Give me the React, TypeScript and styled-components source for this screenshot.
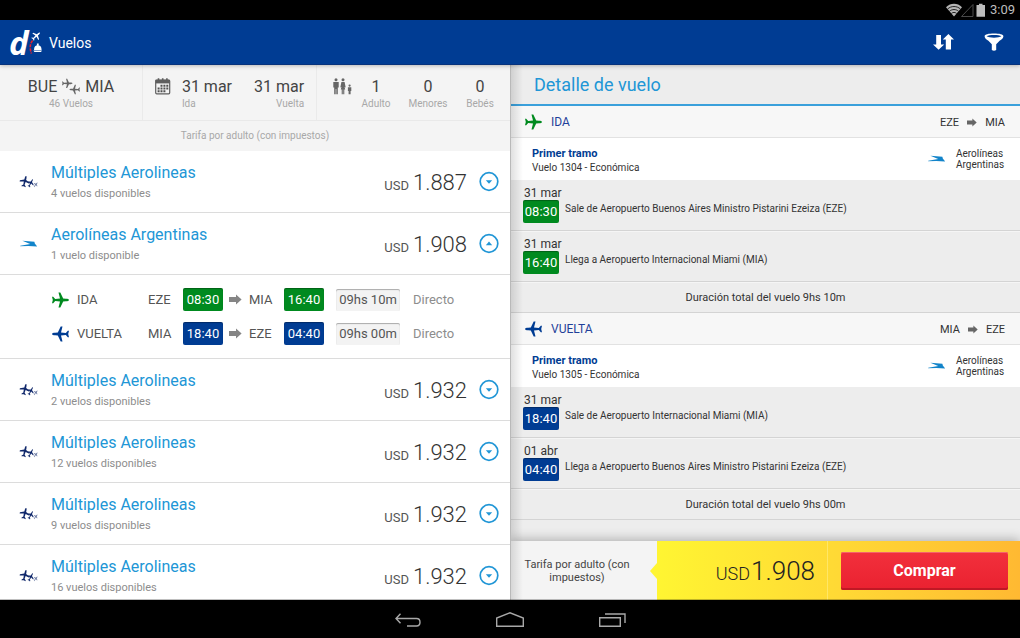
import React, { useState } from "react";
import styled, { createGlobalStyle } from "styled-components";

const GlobalStyle = createGlobalStyle`
  * { box-sizing: border-box; }
  body { margin: 0; background: #000; font-family: Roboto, "Liberation Sans", sans-serif; }
  button { font: inherit; border: 0; padding: 0; background: none; cursor: pointer; }
  h1, h2, h3, p, ul { margin: 0; padding: 0; font-size: inherit; font-weight: inherit; }
  ul { list-style: none; }
  svg { display: block; flex: none; overflow: visible; }
`;

const NAVY = "#003c93";
const GREEN = "#008a1f";
const SKY = "#2196d6";

type Tone = "ida" | "vuelta";
const toneColor = (tone: Tone) => (tone === "ida" ? GREEN : NAVY);

/* ---------- Layout ---------- */

const Screen = styled.div`
  display: flex;
  flex-direction: column;
  height: 100vh;
  overflow: hidden;
`;

const StatusBar = styled.div`
  display: flex;
  align-items: center;
  justify-content: flex-end;
  height: 20px;
  padding-right: 5px;
  background: #000;
  color: #bdbdbd;
  font-size: 13px;
`;

const Clock = styled.span`
  margin-left: 4px;
  line-height: 20px;
`;

const AppBar = styled.header`
  position: relative;
  z-index: 3;
  display: flex;
  align-items: center;
  height: 45px;
  padding: 0 15px 0 9px;
  background: ${NAVY};
  border-bottom: 1px solid #07327c;
  box-shadow: 0 1px 4px rgba(0, 0, 0, 0.25);
  color: #fff;
`;

const AppTitle = styled.h1`
  flex: 1;
  margin-left: 7px;
  padding-top: 1px;
  font-size: 14px;
  line-height: 20px;
`;

const BarActions = styled.div`
  display: flex;
  gap: 28px;
`;

const BarButton = styled.button`
  display: grid;
  place-items: center;
  width: 22px;
  height: 32px;
`;

const Panes = styled.main`
  display: grid;
  grid-template-columns: 1fr 1fr;
  flex: 1;
  min-height: 0;
`;

const ResultsPane = styled.section`
  overflow: hidden;
  background: #fff;
`;

const DetailPane = styled.section`
  position: relative;
  display: flex;
  flex-direction: column;
  overflow: hidden;
  background: #ededed;
  border-left: 1px solid #b9b9b9;
  &::before {
    content: "";
    position: absolute;
    z-index: 2;
    inset: 0 auto 0 0;
    width: 12px;
    background: linear-gradient(to right, rgba(0, 0, 0, 0.12), rgba(0, 0, 0, 0));
    pointer-events: none;
  }
`;

const NavBar = styled.nav`
  position: relative;
  z-index: 3;
  display: flex;
  align-items: center;
  justify-content: center;
  gap: 72px;
  height: 38px;
  padding-top: 1px;
  background: #000;
  box-shadow: 0 -1px 0 rgba(0, 0, 0, 0.25);
`;

const NavButton = styled.button`
  display: grid;
  place-items: center;
  width: 30px;
  height: 30px;
`;

/* ---------- Search summary ---------- */

const Summary = styled.div`
  display: grid;
  grid-template-columns: 142fr 174fr 194fr;
  height: 56px;
  background: #f4f4f4;
  border-bottom: 1px solid #e9e9e9;
`;

const SummaryCell = styled.div<{ $inset?: number }>`
  display: flex;
  justify-content: center;
  padding: 12px 0 0 ${(p) => p.$inset ?? 0}px;
  & + & { border-left: 1px solid #eaeaea; }
`;

const SummaryIcon = styled.span<{ $gap: number }>`
  margin: 1px ${(p) => p.$gap}px 0 0;
`;

const Datum = styled.div<{ $align?: string; $width?: number }>`
  width: ${(p) => (p.$width ? `${p.$width}px` : "auto")};
  text-align: ${(p) => p.$align ?? "center"};
`;

const DatumValue = styled.div`
  display: flex;
  align-items: center;
  justify-content: center;
  gap: 5px;
  color: #444;
  font-size: 16px;
  line-height: 20px;
`;

const PlainValue = styled.div`
  color: #444;
  font-size: 16px;
  line-height: 20px;
`;

const DatumLabel = styled.div`
  color: #a8a8a8;
  font-size: 10px;
  line-height: 14px;
`;

const Dates = styled.div`
  display: flex;
  gap: 22px;
`;

const FareNote = styled.p`
  height: 30px;
  background: #f4f4f4;
  color: #a8a8a8;
  font-size: 10px;
  line-height: 30px;
  text-align: center;
`;

/* ---------- Result list ---------- */

const ResultRow = styled.div`
  display: flex;
  align-items: center;
  height: 62px;
  padding: 0 11px 0 20px;
  border-bottom: 1px solid #dcdcdc;
`;

const AirlineInfo = styled.div`
  flex: 1;
  margin-left: 13px;
  padding-top: 2px;
`;

const AirlineName = styled.h2`
  color: ${SKY};
  font-size: 16px;
  line-height: 20px;
`;

const Availability = styled.p`
  margin-top: 3px;
  color: #8d8d8d;
  font-size: 11px;
  line-height: 16px;
`;

const Price = styled.div`
  display: flex;
  align-items: baseline;
  gap: 4px;
  margin-right: 12px;
  padding-top: 5px;
  color: #333;
  font-size: 22px;
  font-weight: 300;
  line-height: 24px;
`;

const Currency = styled.span`
  color: #555;
  font-size: 13px;
  font-weight: 400;
`;

const ToggleButton = styled.button`
  width: 20px;
  height: 20px;
`;

const Itinerary = styled.div`
  display: grid;
  row-gap: 12px;
  padding: 13px 20px 14px 52px;
  border-bottom: 1px solid #dcdcdc;
`;

const ItineraryLeg = styled.div`
  display: grid;
  grid-template-columns: 25px 71px 35px 46px 20px 35px 52px 77px 1fr;
  align-items: center;
  justify-items: start;
  height: 22px;
  color: #555;
  font-size: 13px;
`;

const TimeChip = styled.span<{ $tone: Tone; $compact?: boolean }>`
  display: block;
  width: ${(p) => (p.$compact ? 36 : 40)}px;
  height: 23px;
  background: ${(p) => toneColor(p.$tone)};
  border-radius: 2px;
  box-shadow: inset 0 1px 1px rgba(0, 0, 0, 0.3);
  color: #fff;
  font-size: 13px;
  line-height: 24px;
  text-align: center;
`;

const DurationChip = styled.span`
  width: 64px;
  height: 22px;
  background: #f3f3f3;
  border-radius: 2px;
  box-shadow: inset 0 1px 1px rgba(0, 0, 0, 0.3);
  line-height: 22px;
  text-align: center;
`;

const Stops = styled.span`
  color: #8d8d8d;
`;

/* ---------- Flight detail ---------- */

const DetailHeader = styled.h2`
  height: 41px;
  padding-left: 23px;
  border-bottom: 2px solid #3aa0db;
  color: ${SKY};
  font-size: 18px;
  line-height: 40px;
`;

const DetailScroll = styled.div`
  flex: 1;
  min-height: 0;
  overflow: hidden;
`;

const LegHeader = styled.div`
  display: flex;
  align-items: center;
  height: 32px;
  padding: 0 15px 0 14px;
  background: #f7f7f7;
  border-bottom: 1px solid #e2e2e2;
  color: #333;
`;

const LegName = styled.h3`
  flex: 1;
  margin-left: 8px;
  padding-top: 1px;
  color: #1f3f99;
  font-size: 12px;
`;

const LegRoute = styled.div`
  display: flex;
  align-items: center;
  gap: 8px;
  padding-top: 1px;
  font-size: 11px;
`;

const Tramo = styled.div`
  display: flex;
  align-items: center;
  height: 42px;
  padding: 0 17px 0 21px;
  background: #fff;
  color: #333;
  font-size: 10px;
`;

const TramoInfo = styled.div`
  flex: 1;
  padding-top: 3px;
  line-height: 14px;
`;

const TramoTitle = styled.h3`
  color: ${NAVY};
  font-size: 11px;
  font-weight: 700;
`;

const Carrier = styled.p`
  width: 47px;
  margin-left: 10px;
  line-height: 11px;
`;

const Segment = styled.div`
  display: flex;
  align-items: center;
  gap: 6px;
  height: 51px;
  padding: 6px 12px 0;
  border-bottom: 1px solid #d4d4d4;
  box-shadow: 0 1px 0 #f5f5f5;
  color: #333;
  font-size: 10px;
`;

const Departure = styled.div`
  width: 36px;
  padding-bottom: 7px;
  font-size: 12px;
  line-height: 14px;
  white-space: nowrap;
`;

const DepartureDate = styled.div`
  padding-left: 1px;
`;

const TotalTime = styled.p`
  height: 31px;
  border-bottom: 1px solid #d4d4d4;
  color: #333;
  font-size: 11px;
  line-height: 31px;
  text-align: center;
`;

const Checkout = styled.footer`
  position: relative;
  display: grid;
  grid-template-columns: 146fr 363fr;
  height: 59px;
  background: #f4f4f4;
  box-shadow: 0 -2px 10px rgba(0, 0, 0, 0.25);
`;

const CheckoutNote = styled.p`
  align-self: center;
  padding: 0 20px 0 6px;
  color: #444;
  font-size: 11px;
  line-height: 13px;
  text-align: center;
`;

const CheckoutPanel = styled.div`
  position: relative;
  display: grid;
  grid-template-columns: 170fr 193fr;
  align-items: center;
  background: linear-gradient(to right, #fff532, #ffd935 50%, #ffb932);
  &::before {
    content: "";
    position: absolute;
    top: 22px;
    left: -7px;
    border: solid transparent;
    border-width: 8px 7px 8px 0;
    border-right-color: #fff532;
  }
`;

const Total = styled.div`
  display: flex;
  align-items: baseline;
  justify-content: flex-end;
  gap: 1px;
  padding: 4px 12px 0 0;
  color: #222;
  font-size: 26px;
  font-weight: 300;
  line-height: 30px;
`;

const TotalCurrency = styled.span`
  font-size: 18px;
`;

const BuyCell = styled.div`
  display: flex;
  align-items: center;
  height: 100%;
  padding: 0 12px 0 13px;
  border-left: 1px solid #ffe766;
`;

const BuyButton = styled.button`
  flex: 1;
  height: 38px;
  background: linear-gradient(#f2303c, #ea2130);
  border-radius: 2px;
  box-shadow: inset 0 -2px 0 #c01824, inset 0 1px 0 #f5626b;
  color: #fff;
  font-size: 16px;
  font-weight: 700;
`;

/* ---------- Icons ---------- */

const PLANE =
  "M18 8C18 7.1 16.5 6.8 15 6.7L12.2 6.6 9.3.4H7.5L9 6.6 4.2 7 2.2 4.8H1L1.8 8 1 11.2H2.2L4.2 9 9 9.4 7.5 15.6H9.3L12.2 9.4 15 9.3C16.5 9.2 18 8.9 18 8Z";

const PlaneIcon = ({ tone }: { tone: Tone }) => (
  <svg width="18" height="16" viewBox="1 0 18 16" fill={toneColor(tone)} aria-hidden="true">
    <path d={PLANE} transform={tone === "ida" ? undefined : "matrix(-1 0 0 1 19 0)"} />
  </svg>
);

const SwapPlanes = () => (
  <svg width="18" height="16" viewBox="0 0 18 16" fill="#666" aria-hidden="true">
    <path d={PLANE} transform="translate(-.6 -.6) scale(.62)" />
    <path d={PLANE} transform="matrix(-.62 0 0 .62 18.6 5.600)" />
  </svg>
);

const ArrowIcon = ({ small }: { small?: boolean }) => (
  <svg width={small ? 10 : 13} height={small ? 9 : 11} viewBox="0 0 13 11" fill={small ? "#666" : "#858585"} aria-hidden="true">
    <path d="M0 3h7V.4L12.6 5.5 7 10.6V8H0Z" />
  </svg>
);

const MultiAirlineIcon = () => (
  <svg width="18" height="14" viewBox="0 0 18 14" fill="#10286b" aria-hidden="true">
    <path d={PLANE} transform="translate(4.8 6.400) rotate(-76) scale(.64 .66) translate(-9.5 -8)" />
    <path d={PLANE} transform="translate(10.800 8) rotate(-62) scale(.5 .42) translate(-9.5 -8)" />
    <path d={PLANE} transform="translate(15.800 9.600) rotate(-50) scale(.3 .28) translate(-9.5 -8)" opacity=".7" />
  </svg>
);

const CondorIcon = () => (
  <svg width="18" height="8" viewBox="0 0 18 8" aria-hidden="true">
    <path d="M2.4.8 14.4 1.800 14.800 3.400 17.2 6.400 8.200 5.900.2 6.200.2 5.700 10.200 4Z" fill="#1284ca" />
  </svg>
);

const BrandLogo = () => (
  <svg width="33" height="32" viewBox="0 0 33 32" aria-hidden="true">
    <text x="0" y="29" fill="#fff" fontFamily="'Open Sans', sans-serif" fontSize="33" fontWeight="700" fontStyle="italic">
      d
    </text>
    <path d="M23.6 14.500C20.8 18 20.600 22 22.4 27.500" fill="none" stroke="#e4202d" strokeWidth="1.6" strokeDasharray="3.200 1" />
    <path d={PLANE} fill="#fff" transform="translate(27.200 10) rotate(-42) scale(.58) translate(-9.500 -8)" />
    <path d="M25 24C25 20.6 26.6 19.2 28.8 19.2S32.600 20.600 32.600 24ZM24.400 24.400H33L32 26H25.400ZM27.900 17.600H29.700V19.200H27.900Z" fill="#fff" />
  </svg>
);

const SortIcon = () => (
  <svg width="22" height="16" viewBox="0 0 22 16" fill="#fff" aria-hidden="true">
    <path d="M3.200 1H8V10.400H11.200L5.600 15.800 0 10.400H3.200ZM12.800 15.400V5.600H9.800L15.400 0 21 5.600H18V15.400Z" />
  </svg>
);

const FunnelIcon = () => (
  <svg width="20" height="18" viewBox="0 0 20 18" aria-hidden="true">
    <path d="M.6 3.200C.6 1.200 4.600.4 10 .4S19.400 1.200 19.400 3.200C19.400 5 17.800 6.200 15.600 7.800L12.200 11.200V17Q10 18.400 7.800 17V11.200L4.400 7.800C2.200 6.200.6 5 .6 3.200Z" fill="#fff" />
    <path d="M2.600 3.300C5 1.600 15 1.600 17.400 3.300 15 5.200 5 5.200 2.600 3.300Z" fill={NAVY} />
  </svg>
);

const CalendarIcon = () => (
  <svg width="16" height="17" viewBox="0 0 16 17" aria-hidden="true">
    <rect x=".7" y="2" width="14" height="13.800" rx="1" fill="#f4f4f4" stroke="#5e5e5e" strokeWidth="1.200" />
    <path d="M.7 1.800H14.700V5.400H.7Z" fill="#5e5e5e" />
    <path d="M3.500.2V2M7.700.2V2M11.900.2V2" stroke="#5e5e5e" strokeWidth="1.600" />
    <path d="M5.500 7.800H13.500M2.600 10.500H13.500M2.600 13.200H10.600" stroke="#505050" strokeWidth="2" strokeDasharray="2 .900" />
  </svg>
);

const FamilyIcon = () => (
  <svg width="19" height="17" viewBox="0 0 19 17" fill="#666" aria-hidden="true">
    <circle cx="3" cy="1.800" r="1.500" />
    <path d="M.3 4H5.700V9.600H4.800V16.200H3.300V11H2.700V16.200H1.200V9.600H.3Z" />
    <circle cx="10" cy="1.800" r="1.500" />
    <path d="M8.400 4H11.600L12.700 9.400 11.600 9 12.200 11.600H11.300V16.200H10.200V11.600H9.800V16.200H8.700V11.600H7.800L8.400 9 7.300 9.400Z" />
    <circle cx="16.600" cy="7.600" r="1.100" />
    <path d="M14.900 9.200H18.300V13H17.600V16.200H15.600V13H14.900Z" />
  </svg>
);

const ToggleIcon = ({ up }: { up: boolean }) => (
  <svg width="20" height="20" viewBox="0 0 20 20" aria-hidden="true">
    <circle cx="10" cy="9.500" r="8.800" fill="none" stroke={SKY} strokeWidth="1.700" />
    <path d={up ? "M6.800 11.200H13.200L10 7.600Z" : "M6.800 8.200H13.200L10 11.800Z"} fill={SKY} />
  </svg>
);

const StatusIcons = () => (
  <svg width="40" height="14" viewBox="0 0 40 14" aria-hidden="true">
    <path d="M0 4.200C4.500-.4 11.500-.4 16 4.200L8 13.400Z" fill="#b5b5b5" />
    <path d="M1.600 6C5 2.700 11 2.700 14.400 6M3.500 8.200C6 6 10 6 12.500 8.200M5.400 10.400C7 9.100 9 9.100 10.600 10.400" fill="none" stroke="#000" strokeWidth=".8" />
    <path d="M27 1.500V13.500H15.500Z" fill="none" stroke="#4a4a4a" />
    <path d="M30.500 2H33V.8H36.500V2H39V13.800H30.500Z" fill="#bdbdbd" />
  </svg>
);

const BackIcon = () => (
  <svg width="26" height="14" viewBox="0 0 26 14" fill="none" stroke="#a8a8a8" strokeWidth="1.400" aria-hidden="true">
    <path d="M5.500.8 1 5.500 5.500 10.200M1 5.500H21.500Q25 5.500 25 9.200T21.500 13H12" />
  </svg>
);

const HomeIcon = () => (
  <svg width="28" height="15" viewBox="0 0 28 15" fill="none" stroke="#a8a8a8" strokeWidth="1.400" aria-hidden="true">
    <path d="M.7 14.300V6L14 .8 27.300 6V14.300Z" />
  </svg>
);

const RecentsIcon = () => (
  <svg width="27" height="14" viewBox="0 0 27 14" fill="none" stroke="#a8a8a8" strokeWidth="1.400" aria-hidden="true">
    <path d="M.7 4.700H21.300V13.300H.7ZM6 1H26V10" />
  </svg>
);

/* ---------- Data ---------- */

type Leg = {
  tone: Tone;
  name: string;
  from: string;
  to: string;
  flight: string;
  total: string;
  duration: string;
  stops: { date: string; time: string; text: string }[];
};

const LEGS: Leg[] = [
  {
    tone: "ida",
    name: "IDA",
    from: "EZE",
    to: "MIA",
    flight: "Vuelo 1304 - Económica",
    total: "9hs 10m",
    duration: "09hs 10m",
    stops: [
      { date: "31 mar", time: "08:30", text: "Sale de Aeropuerto Buenos Aires Ministro Pistarini Ezeiza (EZE)" },
      { date: "31 mar", time: "16:40", text: "Llega a Aeropuerto Internacional Miami (MIA)" },
    ],
  },
  {
    tone: "vuelta",
    name: "VUELTA",
    from: "MIA",
    to: "EZE",
    flight: "Vuelo 1305 - Económica",
    total: "9hs 00m",
    duration: "09hs 00m",
    stops: [
      { date: "31 mar", time: "18:40", text: "Sale de Aeropuerto Internacional Miami (MIA)" },
      { date: "01 abr", time: "04:40", text: "Llega a Aeropuerto Buenos Aires Ministro Pistarini Ezeiza (EZE)" },
    ],
  },
];

const RESULTS = [
  { name: "Múltiples Aerolineas", note: "4 vuelos disponibles", price: "1.887" },
  { name: "Aerolíneas Argentinas", note: "1 vuelo disponible", price: "1.908", legs: LEGS },
  { name: "Múltiples Aerolineas", note: "2 vuelos disponibles", price: "1.932" },
  { name: "Múltiples Aerolineas", note: "12 vuelos disponibles", price: "1.932" },
  { name: "Múltiples Aerolineas", note: "9 vuelos disponibles", price: "1.932" },
  { name: "Múltiples Aerolineas", note: "16 vuelos disponibles", price: "1.932" },
];

/* ---------- Sections ---------- */

const SearchSummary = () => (
  <Summary>
    <SummaryCell>
      <Datum>
        <DatumValue>
          BUE <SwapPlanes /> MIA
        </DatumValue>
        <DatumLabel>46 Vuelos</DatumLabel>
      </Datum>
    </SummaryCell>
    <SummaryCell>
      <SummaryIcon $gap={11}>
        <CalendarIcon />
      </SummaryIcon>
      <Dates>
        <Datum $align="left">
          <PlainValue>31 mar</PlainValue>
          <DatumLabel>Ida</DatumLabel>
        </Datum>
        <Datum $align="right">
          <PlainValue>31 mar</PlainValue>
          <DatumLabel>Vuelta</DatumLabel>
        </Datum>
      </Dates>
    </SummaryCell>
    <SummaryCell $inset={10}>
      <SummaryIcon $gap={0}>
        <FamilyIcon />
      </SummaryIcon>
      {[
        ["1", "Adulto", 48],
        ["0", "Menores", 56],
        ["0", "Bebés", 48],
      ].map(([value, label, width]) => (
        <Datum key={label} $width={Number(width)}>
          <PlainValue>{value}</PlainValue>
          <DatumLabel>{label}</DatumLabel>
        </Datum>
      ))}
    </SummaryCell>
  </Summary>
);

const LegSummary = ({ leg }: { leg: Leg }) => (
  <ItineraryLeg>
    <PlaneIcon tone={leg.tone} />
    <span>{leg.name}</span>
    <span>{leg.from}</span>
    <TimeChip $tone={leg.tone}>{leg.stops[0].time}</TimeChip>
    <ArrowIcon />
    <span>{leg.to}</span>
    <TimeChip $tone={leg.tone}>{leg.stops[1].time}</TimeChip>
    <DurationChip>{leg.duration}</DurationChip>
    <Stops>Directo</Stops>
  </ItineraryLeg>
);

const LegDetail = ({ leg }: { leg: Leg }) => (
  <article>
    <LegHeader>
      <PlaneIcon tone={leg.tone} />
      <LegName>{leg.name}</LegName>
      <LegRoute>
        <span>{leg.from}</span>
        <ArrowIcon small />
        <span>{leg.to}</span>
      </LegRoute>
    </LegHeader>
    <Tramo>
      <TramoInfo>
        <TramoTitle>Primer tramo</TramoTitle>
        <p>{leg.flight}</p>
      </TramoInfo>
      <CondorIcon />
      <Carrier>Aerolíneas Argentinas</Carrier>
    </Tramo>
    {leg.stops.map((stop) => (
      <Segment key={stop.time}>
        <Departure>
          <DepartureDate>{stop.date}</DepartureDate>
          <TimeChip $tone={leg.tone} $compact>
            {stop.time}
          </TimeChip>
        </Departure>
        <p>{stop.text}</p>
      </Segment>
    ))}
    <TotalTime>Duración total del vuelo {leg.total}</TotalTime>
  </article>
);

export default function App() {
  const [open, setOpen] = useState(1);

  return (
    <Screen>
      <GlobalStyle />
      <StatusBar>
        <StatusIcons />
        <Clock>3:09</Clock>
      </StatusBar>
      <AppBar>
        <BrandLogo />
        <AppTitle>Vuelos</AppTitle>
        <BarActions>
          <BarButton type="button" aria-label="Ordenar">
            <SortIcon />
          </BarButton>
          <BarButton type="button" aria-label="Filtrar">
            <FunnelIcon />
          </BarButton>
        </BarActions>
      </AppBar>
      <Panes>
        <ResultsPane>
          <SearchSummary />
          <FareNote>Tarifa por adulto (con impuestos)</FareNote>
          <ul>
            {RESULTS.map((result, index) => {
              const expanded = open === index;
              return (
                <li key={index}>
                  <ResultRow>
                    {result.legs ? <CondorIcon /> : <MultiAirlineIcon />}
                    <AirlineInfo>
                      <AirlineName>{result.name}</AirlineName>
                      <Availability>{result.note}</Availability>
                    </AirlineInfo>
                    <Price>
                      <Currency>USD</Currency>
                      {result.price}
                    </Price>
                    <ToggleButton
                      type="button"
                      aria-label="Ver vuelos"
                      aria-expanded={expanded}
                      onClick={() => setOpen(expanded ? -1 : index)}
                    >
                      <ToggleIcon up={expanded} />
                    </ToggleButton>
                  </ResultRow>
                  {expanded && result.legs && (
                    <Itinerary>
                      {result.legs.map((leg) => (
                        <LegSummary key={leg.name} leg={leg} />
                      ))}
                    </Itinerary>
                  )}
                </li>
              );
            })}
          </ul>
        </ResultsPane>
        <DetailPane>
          <DetailHeader>Detalle de vuelo</DetailHeader>
          <DetailScroll>
            {LEGS.map((leg) => (
              <LegDetail key={leg.name} leg={leg} />
            ))}
          </DetailScroll>
          <Checkout>
            <CheckoutNote>Tarifa por adulto (con impuestos)</CheckoutNote>
            <CheckoutPanel>
              <Total>
                <TotalCurrency>USD</TotalCurrency>
                1.908
              </Total>
              <BuyCell>
                <BuyButton type="button">Comprar</BuyButton>
              </BuyCell>
            </CheckoutPanel>
          </Checkout>
        </DetailPane>
      </Panes>
      <NavBar>
        <NavButton type="button" aria-label="Atrás">
          <BackIcon />
        </NavButton>
        <NavButton type="button" aria-label="Inicio">
          <HomeIcon />
        </NavButton>
        <NavButton type="button" aria-label="Recientes">
          <RecentsIcon />
        </NavButton>
      </NavBar>
    </Screen>
  );
}
